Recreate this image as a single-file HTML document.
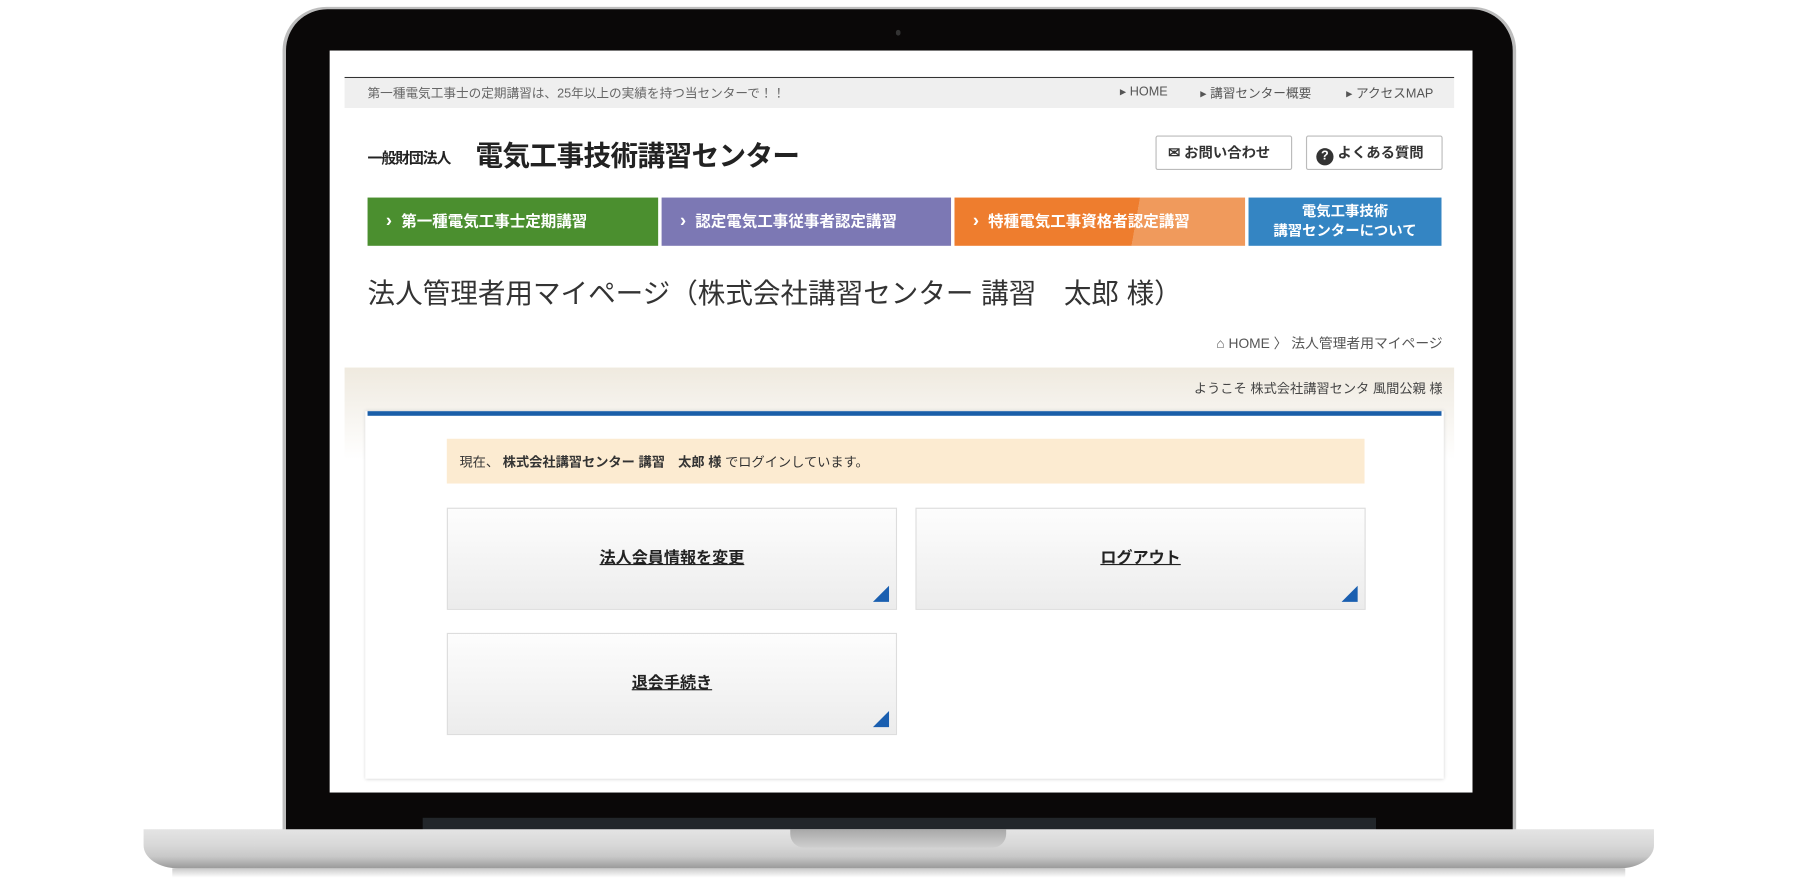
<!DOCTYPE html>
<html><head><meta charset="utf-8"><style>
html,body{margin:0;padding:0;background:#fff;width:1801px;height:895px;overflow:hidden}
#w{position:absolute;left:0;top:0;width:1568px;height:779px;transform:scale(1.14860);transform-origin:0 0;font-family:"Liberation Sans","Noto Sans CJK JP",sans-serif;color:#333}
.a{position:absolute}
.t{white-space:nowrap}
.r{text-align:right;left:300px;width:956px}
.nav{position:absolute;top:172px;height:42px;color:#fff;font-weight:bold;font-size:13.5px;line-height:42px;box-sizing:border-box;padding-left:16px}
.nav b{font-size:16px;margin-right:8px}
.card{position:absolute;width:392px;height:89px;border:1px solid #ddd;background:linear-gradient(#fdfdfd,#ececec);box-sizing:border-box;text-align:center;line-height:84px;font-size:14px;font-weight:bold;text-decoration:underline;color:#222}
.card i{position:absolute;right:6px;bottom:6px;width:0;height:0;border-left:14px solid transparent;border-bottom:14px solid #1a5fb0}
.btn{position:absolute;top:118px;height:30px;border:1px solid #bbb;border-radius:2px;background:#fff;box-sizing:border-box;font-size:12.5px;font-weight:bold;line-height:28px;color:#333}
</style></head><body><div id="w">
<!-- laptop -->
<div class="a" style="left:246px;top:6px;width:1074px;height:720px;border-radius:38px 38px 0 0;background:#bdbdbd"></div>
<div class="a" style="left:249px;top:8px;width:1068px;height:716px;border-radius:36px 36px 0 0;background:#0a0808"></div>
<div class="a" style="left:780px;top:26px;width:4px;height:5px;border-radius:2px;background:#333"></div>
<div class="a" style="left:368px;top:712px;width:830px;height:12px;background:#22262a"></div>
<div class="a" style="left:125px;top:722px;width:1315px;height:34px;background:linear-gradient(#e4e4e4,#d8d8d8 40%,#c8c8c8 70%,#9a9a9a);border-radius:0 0 30px 30px / 0 0 20px 20px"></div>
<div class="a" style="left:688px;top:722px;width:188px;height:16px;background:linear-gradient(#a8a8a8,#cfcfcf);border-radius:0 0 12px 12px"></div>
<div class="a" style="left:150px;top:756px;width:1265px;height:8px;background:linear-gradient(#c9c9c9,#fff)"></div>
<!-- screen -->
<div class="a" style="left:287px;top:44px;width:995px;height:646px;background:#fff;overflow:hidden">
<div class="a" style="width:1568px;height:779px;left:-287px;top:-44px">
<div class="a" style="left:300px;top:67px;width:966px;height:1px;background:#333"></div>
<div class="a" style="left:300px;top:68px;width:966px;height:26px;background:#efefef"></div>
<div class="a t" style="left:320px;top:73px;font-size:11px;color:#666">第一種電気工事士の定期講習は、25年以上の実績を持つ当センターで！！</div>
<div class="a t" style="left:975px;top:73px;font-size:11px;color:#555">▸ HOME</div>
<div class="a t" style="left:1045px;top:73px;font-size:11px;color:#555">▸ 講習センター概要</div>
<div class="a t" style="left:1172px;top:73px;font-size:11px;color:#555">▸ アクセスMAP</div>
<div class="a t" style="left:320px;top:127px;font-size:13px;font-weight:bold;color:#222;letter-spacing:-1px">一般財団法人</div>
<div class="a t" style="left:414px;top:116px;font-size:24px;font-weight:bold;color:#222;letter-spacing:-0.5px">電気工事技術講習センター</div>
<div class="btn" style="left:1006px;width:119px;padding-left:10px">✉ お問い合わせ</div>
<div class="btn" style="left:1137px;width:119px;padding-left:8px"><span style="display:inline-block;width:15px;height:15px;border-radius:50%;background:#333;color:#fff;font-size:11px;line-height:15px;text-align:center;vertical-align:-2px">?</span> よくある質問</div>
<div class="nav" style="left:320px;width:253px;background:#4b8f2f"><b>›</b>第一種電気工事士定期講習</div>
<div class="nav" style="left:576px;width:252px;background:#7c78b4"><b>›</b>認定電気工事従事者認定講習</div>
<div class="nav" style="left:831px;width:253px;background:linear-gradient(100deg,#ee7d2e 62%,#f09a5c 62%)"><b>›</b>特種電気工事資格者認定講習</div>
<div class="nav" style="left:1087px;width:168px;background:#3485c3;line-height:17px;padding:4px 0 0;height:42px;font-size:12.5px;text-align:center">電気工事技術<br>講習センターについて</div>
<div class="a t" style="left:320px;top:236px;font-size:24px;color:#333">法人管理者用マイページ（株式会社講習センター 講習　太郎 様）</div>
<div class="a t r" style="top:290px;font-size:12px;color:#555">⌂ HOME 〉 法人管理者用マイページ</div>
<div class="a" style="left:300px;top:320px;width:966px;height:80px;background:linear-gradient(#efeadf,#f5f2ec 40%,#fff)"></div>
<div class="a t r" style="top:330px;font-size:11.5px;color:#444">ようこそ 株式会社講習センタ 風間公親 様</div>
<div class="a" style="left:318px;top:358px;width:939px;height:320px;background:#fff;box-shadow:0 0 3px #ccc"></div>
<div class="a" style="left:320px;top:358px;width:935px;height:4px;background:#1a5ea8"></div>
<div class="a" style="left:389px;top:382px;width:799px;height:39px;background:#fcebd1"></div>
<div class="a t" style="left:400px;top:394px;font-size:11.5px;color:#333">現在、 <b>株式会社講習センター 講習　太郎 様</b> でログインしています。</div>
<div class="card" style="left:389px;top:442px">法人会員情報を変更<i></i></div>
<div class="card" style="left:797px;top:442px">ログアウト<i></i></div>
<div class="card" style="left:389px;top:551px">退会手続き<i></i></div>
</div></div>
</div></body></html>
